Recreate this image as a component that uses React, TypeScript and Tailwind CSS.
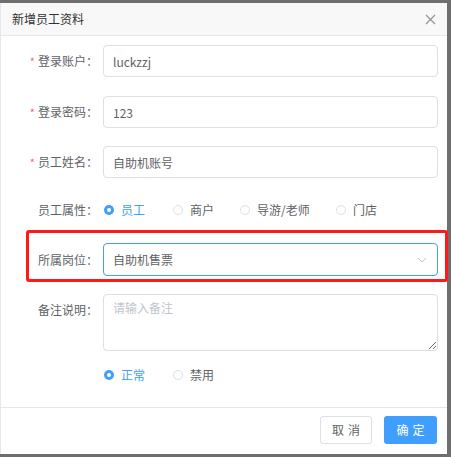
import React, { useState } from 'react';

const font = { fontFamily: '"Noto Sans CJK SC", "Noto Sans", sans-serif' };

function Radio({ label, checked, onClick }: { label: string; checked?: boolean; onClick?: () => void }) {
  return (
    <label className="flex items-center cursor-pointer" onClick={onClick}>
      <span
        className={
          checked
            ? 'w-[10px] h-[10px] rounded-full bg-[#409eff] flex items-center justify-center'
            : 'w-[10px] h-[10px] rounded-full border border-[#dcdfe6] bg-white'
        }
      >
        {checked && <span className="w-[4px] h-[4px] rounded-full bg-white" />}
      </span>
      <span className={checked ? 'ml-[7px] text-[#409eff]' : 'ml-[7px] text-[#606266]'}>{label}</span>
    </label>
  );
}

function Label({ text, required }: { text: string; required?: boolean }) {
  return (
    <div className="w-[102px] shrink-0 flex items-center justify-end pr-[5px] h-[32px] text-[#606266]">
      {required && <span className="text-[#f56c6c] mr-[3px] text-[11px]">*</span>}
      <span>{text}：</span>
    </div>
  );
}

export default function App() {
  const [kind, setKind] = useState('员工');
  const [status, setStatus] = useState('正常');

  return (
    <div className="w-[451px] h-[457px] bg-[#6e6e6e] pt-[3px] pr-[4px] pb-[3px] overflow-hidden" style={font}>
      <div className="w-[447px] h-[451px] bg-white flex flex-col border-l border-[#e4e7ed] text-[12px]">
        {/* header */}
        <div className="h-[33px] bg-[#f8f8f9] border-b border-[#e4e7ed] flex items-center justify-between pl-[11px] pr-[10px] shrink-0">
          <span className="text-[12px] text-[#303133]">新增员工资料</span>
          <svg width="11" height="11" viewBox="0 0 11 11" className="mr-[1px]">
            <path d="M1 1 L10 10 M10 1 L1 10" stroke="#909399" strokeWidth="1.2" />
          </svg>
        </div>

        {/* body */}
        <div className="h-[371px] shrink-0 pt-[9px] pr-[9px]">
          <div className="flex">
            <Label text="登录账户" required />
            <input
              className="flex-1 h-[32px] border border-[#dcdfe6] rounded-[4px] px-[9px] text-[#606266] outline-none"
              defaultValue="luckzzj"
            />
          </div>
          <div className="flex mt-[19px]">
            <Label text="登录密码" required />
            <input
              className="flex-1 h-[32px] border border-[#dcdfe6] rounded-[4px] px-[9px] text-[#606266] outline-none"
              defaultValue="123"
            />
          </div>
          <div className="flex mt-[18px]">
            <Label text="员工姓名" required />
            <input
              className="flex-1 h-[32px] border border-[#dcdfe6] rounded-[4px] px-[9px] text-[#606266] outline-none"
              defaultValue="自助机账号"
            />
          </div>
          <div className="flex mt-[16px]">
            <Label text="员工属性" />
            <div className="flex items-center pl-[1px] h-[32px]">
              <div className="w-[69px]"><Radio label="员工" checked={kind === '员工'} onClick={() => setKind('员工')} /></div>
              <div className="w-[67px]"><Radio label="商户" checked={kind === '商户'} onClick={() => setKind('商户')} /></div>
              <div className="w-[96px]"><Radio label="导游/老师" checked={kind === '导游/老师'} onClick={() => setKind('导游/老师')} /></div>
              <Radio label="门店" checked={kind === '门店'} onClick={() => setKind('门店')} />
            </div>
          </div>
          <div className="flex mt-[17px] relative">
            <div className="absolute left-[25px] right-[-10px] top-[-13px] bottom-[-6px] border-[3px] border-[#ff1a1a] rounded-[3px] pointer-events-none" />
            <div className="w-[102px] shrink-0 flex items-center justify-end pr-[5px] h-[33px] text-[#606266]">所属岗位：</div>
            <div className="flex-1 h-[33px] border border-[#409eff] rounded-[4px] px-[9px] flex items-center justify-between">
              <span className="text-[#606266]">自助机售票</span>
              <svg width="10" height="6" viewBox="0 0 10 6" className="mr-[1px]">
                <path d="M1 1 L5 5 L9 1" fill="none" stroke="#c0c4cc" strokeWidth="1" />
              </svg>
            </div>
          </div>
          <div className="flex mt-[18px]">
            <Label text="备注说明" />
            <textarea
              className="flex-1 h-[57px] border border-[#dcdfe6] rounded-[4px] px-[9px] py-[4px] text-[#606266] placeholder:text-[#c0c4cc] outline-none resize-y"
              placeholder="请输入备注"
            />
          </div>
          <div className="flex mt-[14px] h-[20px] items-center pl-[103px]">
            <div className="w-[69px]"><Radio label="正常" checked={status === '正常'} onClick={() => setStatus('正常')} /></div>
            <Radio label="禁用" checked={status === '禁用'} onClick={() => setStatus('禁用')} />
          </div>
        </div>

        {/* footer */}
        <div className="flex-1 border-t border-[#e4e7ed] flex justify-end items-start pt-[8px] pr-[10px] gap-[12px]">
          <button className="w-[52px] h-[28px] border border-[#dcdfe6] rounded-[3px] bg-white text-[#606266] tracking-[4px] pl-[4px]">
            取消
          </button>
          <button className="w-[53px] h-[28px] rounded-[3px] bg-[#409eff] text-white tracking-[4px] pl-[4px]">
            确定
          </button>
        </div>
      </div>
    </div>
  );
}
